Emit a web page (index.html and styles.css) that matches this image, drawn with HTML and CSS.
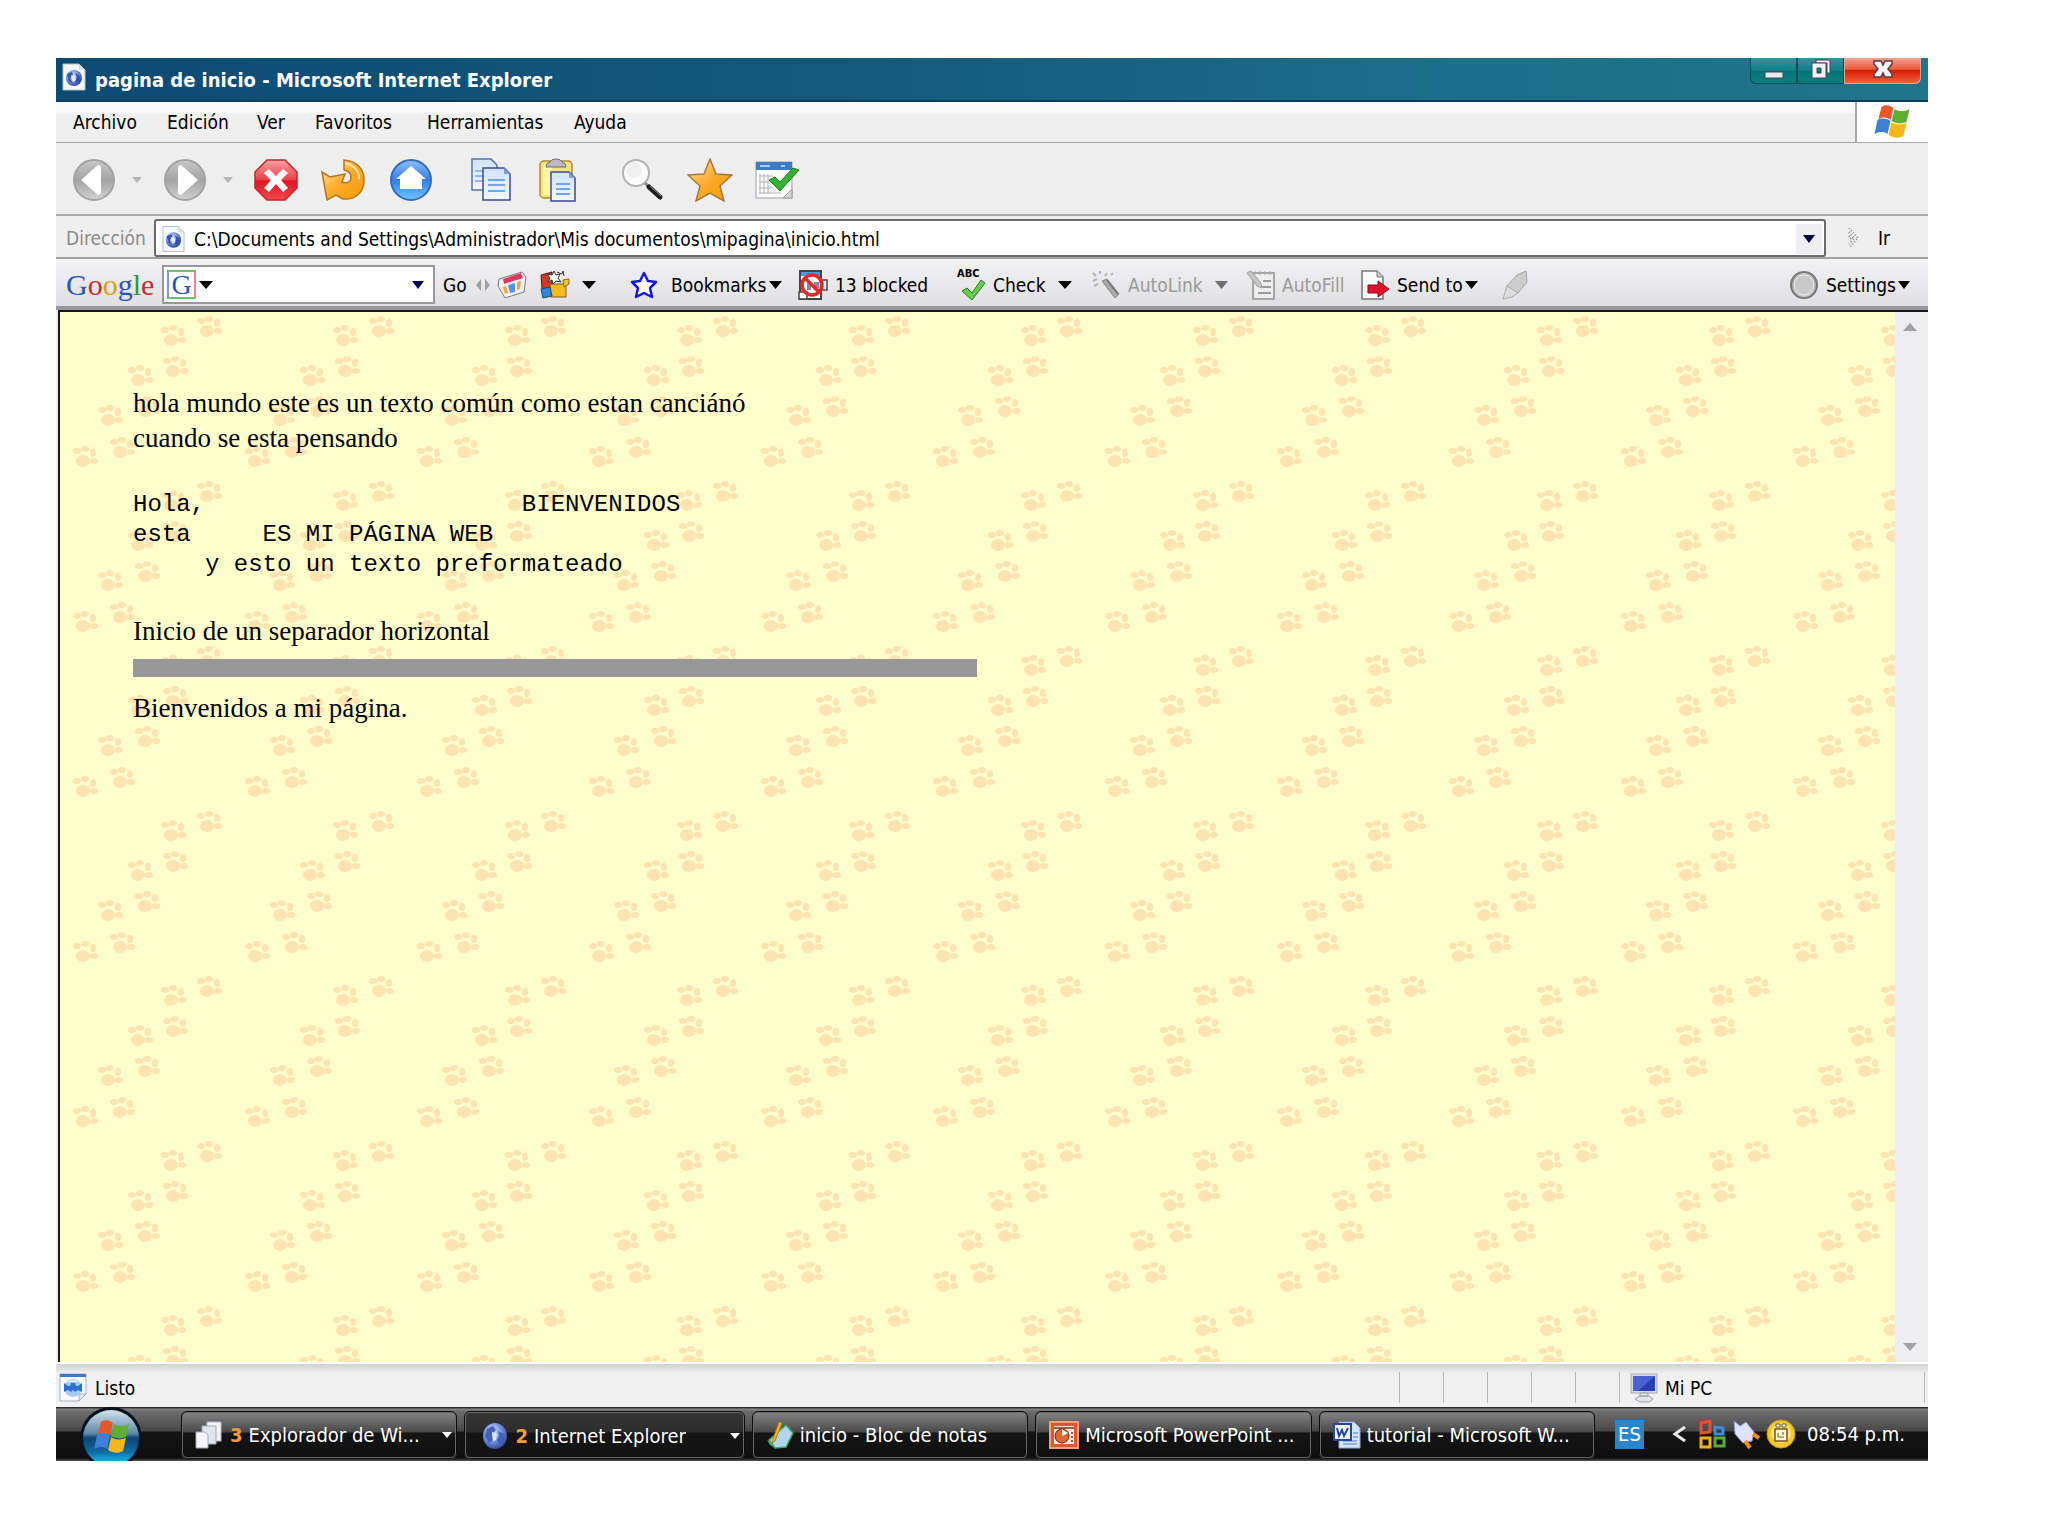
FILE: index.html
```html
<!DOCTYPE html>
<html lang="es">
<head>
<meta charset="utf-8">
<title>pagina de inicio - Microsoft Internet Explorer</title>
<link rel="stylesheet" href="styles.css">
</head>
<body>
<svg class="defs" width="0" height="0" aria-hidden="true">
  <defs>
    <linearGradient id="gray" x1="0" y1="0" x2="0" y2="1"><stop offset="0" stop-color="#c9c9c9"/><stop offset=".5" stop-color="#a3a3a3"/><stop offset="1" stop-color="#d2d2d2"/></linearGradient>
    <linearGradient id="red" x1="0" y1="0" x2="0" y2="1"><stop offset="0" stop-color="#f5a0a4"/><stop offset=".5" stop-color="#ee3f47"/><stop offset=".52" stop-color="#dd1520"/><stop offset="1" stop-color="#f04a50"/></linearGradient>
    <linearGradient id="blue" x1="0" y1="0" x2="0" y2="1"><stop offset="0" stop-color="#8fbdf6"/><stop offset=".5" stop-color="#2f7ff0"/><stop offset="1" stop-color="#6fc4ff"/></linearGradient>
    <linearGradient id="gold" x1="0" y1="0" x2="1" y2="1"><stop offset="0" stop-color="#ffe9a8"/><stop offset=".5" stop-color="#fbab2c"/><stop offset="1" stop-color="#f59a00"/></linearGradient>
    <linearGradient id="sheet" x1="0" y1="0" x2="0" y2="1"><stop offset="0" stop-color="#cfe3fc"/><stop offset="1" stop-color="#f4f9ff"/></linearGradient>
    <radialGradient id="globe" cx=".4" cy=".35" r=".7"><stop offset="0" stop-color="#dfe8fb"/><stop offset=".55" stop-color="#6f8fd8"/><stop offset="1" stop-color="#2c3f94"/></radialGradient>
    <linearGradient id="orb" x1="0" y1="0" x2="0" y2="1"><stop offset="0" stop-color="#d3e2ec"/><stop offset=".42" stop-color="#5d88a6"/><stop offset=".5" stop-color="#0d4472"/><stop offset=".75" stop-color="#0f6ba6"/><stop offset="1" stop-color="#22d0ff"/></linearGradient>
    <symbol id="flag" viewBox="0 0 36 34">
      <path d="M7 2c4-3 8-2 12 1l-3 12c-4-3-8-3-12-1z" fill="#e8562a"/>
      <path d="M20 4c5 3 10 3 15 0l-3 13c-5 2-10 2-15-1z" fill="#5eb030"/>
      <path d="M3 15c4-2 9-2 13 1l-3 13c-4-3-9-2-13 0z" fill="#3f7fd6"/>
      <path d="M17 17c4 3 10 3 15 1l-3 13c-5 3-10 2-15-1z" fill="#f5b81c"/>
    </symbol>
    <symbol id="page" viewBox="0 0 24 28">
      <path d="M1 1h16l6 6v20H1z" fill="#f7f8fb" stroke="#b8bcc8"/>
      <path d="M17 1v6h6z" fill="#d7dbe6"/>
      <circle cx="12" cy="15" r="8" fill="url(#globe)"/>
      <path d="M5 11l5-2 1 3-3 3 2 5-3-2zM13 10l5 3 1 5-4 3-2-4 2-3z" fill="#3452ae"/>
      <path d="M9 12l4 1 1 4-3 2z" fill="#e6eefc"/>
    </symbol>
  </defs>
</svg>

<main class="window">
  <header class="titlebar">
    <svg class="title-icon" width="24" height="28"><use href="#page"/></svg>
    <h1 class="title">pagina de inicio - Microsoft Internet Explorer</h1>
    <div class="controls">
      <button class="control control-min" aria-label="Minimizar"><svg width="20" height="8"><rect x="1" y="1" width="18" height="6" fill="#e9e9ee" stroke="#3d4a52"/></svg></button>
      <button class="control control-max" aria-label="Restaurar"><svg width="20" height="20"><path d="M5 1h14v13h-3V4H5z" fill="#f2f2f5" stroke="#3d4a52"/><path d="M1 4h14v15H1zM6 9v5h4V9z" fill="#f2f2f5" fill-rule="evenodd" stroke="#3d4a52"/></svg></button>
      <button class="control control-close" aria-label="Cerrar"><svg width="22" height="18"><path d="M2 1h7l2 4 2-4h7v3l-4 5 4 5v3h-7l-2-4-2 4H2v-3l4-5-4-5z" fill="#f4f4f6" stroke="#5b3a44" stroke-width="1.5"/></svg></button>
    </div>
  </header>

  <nav class="menubar">
    <div class="menus">
      <button class="menu menu-archivo">Archivo</button>
      <button class="menu menu-edicion">Edición</button>
      <button class="menu menu-ver">Ver</button>
      <button class="menu menu-favoritos">Favoritos</button>
      <button class="menu menu-herramientas">Herramientas</button>
      <button class="menu">Ayuda</button>
    </div>
    <div class="brand"><svg width="37" height="34"><use href="#flag"/></svg></div>
  </nav>

  <div class="toolbar">
    <button class="tool tool-nav" aria-label="Atrás">
      <svg width="44" height="42" viewBox="0 0 44 42"><circle cx="22" cy="21" r="20" fill="url(#gray)" stroke="#a2a2a2" stroke-width="2"/><path d="M9 21L26 6q3 0 3 3v24q0 3-3 3z" fill="#fff"/></svg>
      <svg width="10" height="6"><path d="M0 0h10L5 6z" fill="#b5b5b5"/></svg>
    </button>
    <button class="tool tool-nav" aria-label="Adelante">
      <svg width="44" height="42" viewBox="0 0 44 42"><circle cx="22" cy="21" r="20" fill="url(#gray)" stroke="#a2a2a2" stroke-width="2"/><path d="M35 21L18 6q-3 0-3 3v24q0 3 3 3z" fill="#fff"/></svg>
      <svg width="10" height="6"><path d="M0 0h10L5 6z" fill="#b5b5b5"/></svg>
    </button>
    <button class="tool tool-main" aria-label="Detener">
      <svg width="44" height="42" viewBox="0 0 44 42"><path d="M13 1h18l12 12v16L31 41H13L1 29V13z" fill="url(#red)" stroke="#c2242c" stroke-width="1.5"/><path d="M10 14l5-4 7 7 7-7 5 4-7 7 7 8-5 4-7-8-7 8-5-4 7-8z" fill="#fff"/></svg>
    </button>
    <button class="tool tool-main" aria-label="Actualizar">
      <svg width="44" height="42" viewBox="0 0 44 42"><path d="M23 1c13 1 20 9 20 20 0 13-9 20-21 19l-7-4-9 5L1 13l8 5 15-3-3 8c6 2 9 0 9-5 0-4-3-6-7-7z" fill="url(#gold)" stroke="#b5761c" stroke-width="1.5"/><path d="M24 4c9 2 14 8 14 16" fill="none" stroke="#ffe2a0" stroke-width="2"/></svg>
    </button>
    <button class="tool tool-home" aria-label="Inicio">
      <svg width="44" height="42" viewBox="0 0 44 42"><circle cx="22" cy="21" r="20" fill="url(#blue)" stroke="#3569bd" stroke-width="2"/><path d="M22 7l15 13h-4v10H11V20H7z" fill="#fff"/></svg>
    </button>
    <button class="tool tool-main" aria-label="Copiar">
      <svg width="40" height="43" viewBox="0 0 40 43"><path d="M1 1h19l6 6v25H1z" fill="url(#sheet)" stroke="#5472b8" stroke-width="1.5"/><path d="M4 13h16M4 18h16M4 23h16" stroke="#8db7f0" stroke-width="2"/><path d="M12 10h21l6 6v26H12z" fill="url(#sheet)" stroke="#40479c" stroke-width="1.5"/><path d="M33 10v6h6z" fill="#7da2de"/><path d="M17 22h17M17 27h17M17 33h17" stroke="#6ea6f2" stroke-width="2"/></svg>
    </button>
    <button class="tool tool-paste" aria-label="Pegar">
      <svg width="38" height="44" viewBox="0 0 38 44"><rect x="1" y="3" width="32" height="37" rx="4" fill="#fbe375" stroke="#b08a2a" stroke-width="1.5"/><rect x="4" y="7" width="9" height="30" fill="#fff3b0"/><path d="M7 9q0-4 4-5 1-3 6-3t6 3q4 1 4 5z" fill="#b9bcc4" stroke="#666b7a"/><path d="M12 14h18l6 6v23H12z" fill="url(#sheet)" stroke="#40479c" stroke-width="1.5"/><path d="M30 14v6h6z" fill="#7da2de"/><path d="M17 26h14M17 31h14M17 36h14" stroke="#6ea6f2" stroke-width="2"/></svg>
    </button>
    <button class="tool tool-search" aria-label="Búsqueda">
      <svg width="44" height="42" viewBox="0 0 44 42"><circle cx="15" cy="14" r="13" fill="#fbfbfb" stroke="#b4b4b4" stroke-width="2"/><circle cx="13" cy="11" r="8" fill="#f0f0f0"/><path d="M24 24l6 6" stroke="#8d8d8d" stroke-width="3"/><path d="M28 28l11 10" stroke="#1c1c1c" stroke-width="5" stroke-linecap="round"/><path d="M29 27l11 10" stroke="#999" stroke-width="1"/></svg>
    </button>
    <button class="tool tool-main" aria-label="Favoritos">
      <svg width="46" height="44" viewBox="0 0 46 44"><path d="M23 1l6 15 16 1-12 11 4 15-14-8-14 8 4-15L1 17l16-1z" fill="url(#gold)" stroke="#a8783a" stroke-width="1.5"/></svg>
    </button>
    <button class="tool" aria-label="Historial">
      <svg width="46" height="40" viewBox="0 0 46 40"><rect x="1" y="2" width="36" height="36" fill="#fafafa" stroke="#9aa0a8"/><rect x="1" y="2" width="36" height="8" fill="#3b7cc4"/><path d="M5 6h10M26 6h4" stroke="#a9cbf0" stroke-width="2"/><path d="M5 14v20M9 14v20M13 14v20M4 16h14M4 22h12M4 28h14M4 33h22" stroke="#b5b5b5"/><path d="M28 38l9-9v9z" fill="#d9d9d9" stroke="#9a9a9a"/><path d="M14 20l6-3 5 5L38 8l6 2-19 21z" fill="#35b52f" stroke="#1b7d22"/></svg>
    </button>
  </div>

  <form class="address">
    <label class="address-label" for="url">Dirección</label>
    <div class="address-box">
      <svg class="address-icon" width="23" height="28"><use href="#page"/></svg>
      <input class="address-input" id="url" type="text" value="C:\Documents and Settings\Administrador\Mis documentos\mipagina\inicio.html">
      <button class="address-drop" type="button" aria-label="Mostrar direcciones"><svg width="12" height="8"><path d="M0 0h12L6 8z" fill="#00003c"/></svg></button>
    </div>
    <svg class="chevrons" width="12" height="20"><path d="M1 0l9 10-9 10M1 4l5 6-5 6M1 8l2 2-2 2" fill="none" stroke="#8a8a8a" stroke-width="2" stroke-dasharray="1 2"/></svg>
    <button class="go" type="button">Ir</button>
  </form>

  <div class="google">
    <div class="google-logo"><span class="c-blue">G</span><span class="c-red">o</span><span class="c-yellow">o</span><span class="c-blue">g</span><span class="c-green">l</span><span class="c-red">e</span></div>
    <div class="google-search">
      <span class="google-g">G</span>
      <svg width="14" height="8"><path d="M0 0h14L7 8z" fill="#000"/></svg>
      <input class="google-input" type="text" aria-label="Buscar en Google">
      <svg width="12" height="8"><path d="M0 0h12L6 8z" fill="#000050"/></svg>
    </div>
    <button class="gbtn">Go</button>
    <div class="splitter"><svg width="14" height="12"><path d="M5 0v12L0 6zM9 0v12l5-6z" fill="#a0a0a0"/></svg></div>
    <button class="gbtn" aria-label="Noticias"><svg width="30" height="27" viewBox="0 0 30 27"><path d="M2 8L25 1l4 5-2 15-19 6L1 15z" fill="#f1f1f4" stroke="#777"/><path d="M6 8l18-6 2 5L7 13z" fill="#e5355f"/><path d="M6 16l3-1 2 7-3 1zM20 11l4-1-1 8-3 1z" fill="#f2a33a"/><path d="M11 14l7-2v9l-5 1z" fill="#5b8fe0"/></svg></button>
    <button class="gbtn" aria-label="Novedades"><svg width="30" height="29" viewBox="0 0 30 29"><path d="M1 5l11-3v17H2z" fill="#cf3a20" stroke="#5c1b10"/><path d="M10 14h16v13H11z" fill="#f5b922" stroke="#8a5c0a"/><path d="M1 19l9-2 2 9-9 2z" fill="#2d86d8" stroke="#174a86"/><path d="M8 12l2-4-3-4 5 1 2-4 2 4 4-1-2 4 3 4-5-1-3 3-1-4z" fill="#fff" stroke="#333"/><path d="M17 2l5 2 1-3 1 5" fill="none" stroke="#333"/><path d="M23 10l6-1v5l-5 3z" fill="#f0c62c" stroke="#8a6b0a"/></svg>
      <svg class="drop-far" width="14" height="8"><path d="M0 0h14L7 8z" fill="#000"/></svg></button>
    <button class="gbtn gap-wide"><svg width="28" height="28" viewBox="0 0 28 28"><path d="M14 2l4 8 8 1-6 6 2 9-8-4-8 4 2-9-6-6 8-1z" fill="#fff" stroke="#1414f0" stroke-width="2.5" stroke-linejoin="round"/></svg><span class="with-drop">Bookmarks<svg width="13" height="8"><path d="M0 0h13L6.500 8z" fill="#000"/></svg></span></button>
    <button class="gbtn gap-mid"><svg width="30" height="30" viewBox="0 0 30 30"><path d="M2 1h21v28H2z" fill="#fff" stroke="#444" stroke-width="2"/><path d="M3 2h19v4H3z" fill="#4a9be8"/><path d="M22 10h7v10h-7zM1 22h8v7H1z" fill="#fff" stroke="#444" stroke-width="1.500"/><circle cx="14" cy="15" r="10" fill="#fff" fill-opacity=".6" stroke="#e22a2a" stroke-width="3.500"/><path d="M9 13h4v7H9zM16 12h5v6h-5z" fill="#889"/><path d="M7 8l14 14" stroke="#e22a2a" stroke-width="3.500"/></svg>13 blocked</button>
    <button class="gbtn gap-mid"><span class="spell"><span class="spell-abc">ABC</span><svg width="25" height="22" viewBox="0 0 25 22"><path d="M1 12l5-3 5 5L20 1l4 3-13 17z" fill="#62cf4a" stroke="#2c7a2a"/></svg></span>Check<svg class="drop-mid" width="14" height="8"><path d="M0 0h14L7 8z" fill="#000"/></svg></button>
    <button class="gbtn gap-mid" disabled><svg width="30" height="30" viewBox="0 0 30 30"><path d="M11 11l5-2 12 15-4 4z" fill="#a9a9a9" stroke="#888"/><path d="M16 10l11 14" stroke="#777" stroke-width="2"/><path d="M2 3l3 3M9 1v3M16 3l-2 3M2 11l4-2M3 16l4-2M20 5l2-2" stroke="#b5b5b5" stroke-width="2"/></svg>AutoLink<svg class="drop-mid" width="13" height="8"><path d="M0 0h13L6.500 8z" fill="#707070"/></svg></button>
    <button class="gbtn gap-mid" disabled><svg width="29" height="30" viewBox="0 0 29 30"><path d="M7 3h21v26H7z" fill="#eee" stroke="#a5a5a5" stroke-width="2"/><path d="M9 1v4M14 1v4M19 1v4M24 1v4" stroke="#aaa"/><path d="M17 11h8M14 17h11M12 23h13" stroke="#999" stroke-width="2"/><path d="M1 3l4-2 10 12 1 5-5-2z" fill="#c4c4c4" stroke="#a0a0a0"/></svg>AutoFill</button>
    <button class="gbtn gap-mid"><svg width="30" height="30" viewBox="0 0 30 30"><path d="M2 1h15l6 6v22H2z" fill="#fafafa" stroke="#777" stroke-width="1.500"/><path d="M17 1v6h6" fill="#ccc" stroke="#777"/><path d="M8 15h10V11l11 8-11 8v-4H8z" fill="#e3102a" stroke="#8e0a1c"/></svg><span class="with-drop">Send to<svg width="13" height="8"><path d="M0 0h13L6.500 8z" fill="#000"/></svg></span></button>
    <button class="gbtn" disabled aria-label="Resaltar"><svg width="28" height="30" viewBox="0 0 28 30"><path d="M16 5l9-4 1 11-9 11-6-1-6-5z" fill="#cdcdcd" stroke="#a5a5a5"/><path d="M6 16l11 7-6 4-9 2z" fill="#dedede" stroke="#aaa"/></svg></button>
    <button class="gbtn gap-mid"><svg width="30" height="30" viewBox="0 0 30 30"><circle cx="15" cy="15" r="13" fill="url(#gray)" stroke="#777" stroke-width="2"/><circle cx="15" cy="15" r="10" fill="#c9c9c9" stroke="#eee"/></svg><span class="with-drop">Settings<svg width="12" height="8"><path d="M0 0h12L6 8z" fill="#000"/></svg></span></button>
  </div>

  <div class="viewport">
    <article class="page">
      <p class="text">hola mundo este es un texto común como estan canciánó<br>cuando se esta pensando</p>
      <pre class="pre">Hola,                      BIENVENIDOS
esta     ES MI PÁGINA WEB
     y esto un texto preformateado</pre>
      <p class="text">Inicio de un separador horizontal</p>
      <hr class="rule">
      <p class="text">Bienvenidos a mi página.</p>
    </article>
    <div class="scrollbar">
      <button class="scroll" aria-label="Subir"><svg width="14" height="8"><path d="M0 8h14L7 0z" fill="#a2a2a6"/></svg></button>
      <button class="scroll" aria-label="Bajar"><svg width="14" height="8"><path d="M0 0h14L7 8z" fill="#a2a2a6"/></svg></button>
    </div>
  </div>

  <footer class="status">
    <div class="status-main">
      <svg width="28" height="29" viewBox="0 0 28 29"><path d="M1 1h26v20l-7 7H1z" fill="#fafbfd" stroke="#a9b0bd"/><path d="M1 1h26v3H1z" fill="#3c78d0"/><path d="M20 28v-7h7z" fill="#e3e6ec" stroke="#a9b0bd"/><circle cx="14" cy="15" r="9" fill="#a5cbf8"/><path d="M5 10l4 3h2l1-3h4l1 3h2l4-3v9l-4-2-3 2-2-2-2 2-3-2-4 2z" fill="#2c70d6"/><path d="M8 9q6-4 12 0z" fill="#e6f1fe"/></svg>
      <span>Listo</span>
    </div>
    <div class="cell"></div><div class="cell"></div><div class="cell"></div><div class="cell"></div><div class="cell"></div>
    <div class="zone">
      <svg width="28" height="30" viewBox="0 0 28 30"><rect x="1" y="1" width="26" height="19" fill="#d9dbe0" stroke="#a7a9b0"/><rect x="3" y="3" width="22" height="15" fill="#2a3fb0"/><path d="M3 3h22L8 18H3z" fill="#4a63cf"/><path d="M10 20h8v3h-8zM5 26l5-3h9l4 3-4 3h-9z" fill="#e4e5e9" stroke="#9ea0a8"/></svg>
      <span>Mi PC</span>
    </div>
  </footer>

  <nav class="taskbar">
    <button class="start" aria-label="Inicio"><svg width="64" height="54" viewBox="0 0 64 54"><circle cx="32" cy="31" r="31" fill="#07141d"/><circle cx="32" cy="31" r="28" fill="url(#orb)"/><use href="#flag" x="15" y="12" width="36" height="36"/></svg></button>
    <div class="tasks">
      <button class="task"><svg width="28" height="28" viewBox="0 0 28 28"><path d="M12 1h14v19H12z" fill="#f3f3f6" stroke="#b9b9c4"/><path d="M7 5h14v18H7z" fill="#e3e4ee" stroke="#a5a7b8"/><path d="M1 11h9l3 3v13H1z" fill="#f6f6fa" stroke="#a5a7b8"/></svg><b class="count">3</b><span class="task-name">Explorador de Wi...</span><svg class="task-drop" width="10" height="6"><path d="M0 0h10L5 6z" fill="#fff"/></svg></button>
      <button class="task task-active"><svg width="26" height="28" viewBox="0 0 26 28"><ellipse cx="13" cy="14" rx="12" ry="13" fill="url(#globe)"/><path d="M5 7l6-3 3 4-4 4 1 6-4 3-4-7zM16 9l6 3 1 5-5 6-3-5 2-4z" fill="#4560b4"/><path d="M10 10l5 2-1 6-3 1z" fill="#dbe5fa"/></svg><b class="count">2</b><span class="task-name">Internet Explorer</span><svg class="task-drop" width="10" height="6"><path d="M0 0h10L5 6z" fill="#fff"/></svg></button>
      <button class="task"><svg width="28" height="28" viewBox="0 0 28 28"><path d="M3 19L20 4l7 8-7 14-11 1z" fill="#b4d5ef" stroke="#3fa560" stroke-width="1.500"/><path d="M1 19l5 3 3 5-5-3z" fill="#3fae5c"/><path d="M13 1l3 1-7 18-3 2 1-4z" fill="#f5b52c" stroke="#b87a10"/></svg><span class="task-name">inicio - Bloc de notas</span></button>
      <button class="task"><svg width="30" height="28" viewBox="0 0 30 28"><rect x="1" y="1" width="28" height="26" fill="#d8592c" stroke="#f0a07c" stroke-width="2"/><rect x="5" y="5" width="20" height="18" fill="#fbe9e0"/><circle cx="13" cy="15" r="7" fill="#e0662e" stroke="#5a2412"/><path d="M13 15V8l6 4z" fill="#fff"/><path d="M5 7h20M22 12h2M22 16h2M22 20h2" stroke="#7a3018" stroke-width="1.500"/></svg><span class="task-name">Microsoft PowerPoint ...</span></button>
      <button class="task"><svg width="28" height="28" viewBox="0 0 28 28"><path d="M6 1h15l6 6v20H6z" fill="#d6e4fa" stroke="#8ba6dc"/><path d="M10 20h14M10 23h14M20 12h5M20 16h5" stroke="#4c78c8"/><rect x="1" y="3" width="17" height="16" fill="#f2f6ff" stroke="#2448a0" stroke-width="2"/><path d="M4 7l2 8 3-6 2 6 4-8" fill="none" stroke="#2448a0" stroke-width="2"/></svg><span class="task-name">tutorial - Microsoft W...</span></button>
    </div>
    <div class="tray">
      <span class="lang">ES</span>
      <svg class="tray-arrow" width="14" height="16"><path d="M13 1L3 8l10 7" fill="none" stroke="#e8e8e8" stroke-width="3"/></svg>
      <svg width="28" height="29" viewBox="0 0 28 29"><path d="M3 3l9-2v11l-9 1z" fill="none" stroke="#e8502a" stroke-width="3"/><path d="M17 7l8 1v6h-8z" fill="none" stroke="#3b8ede" stroke-width="3"/><path d="M3 18h9v9H3z" fill="none" stroke="#f2b01e" stroke-width="3"/><path d="M17 18h9v8h-9z" fill="none" stroke="#5cab35" stroke-width="3"/></svg>
      <svg width="28" height="29" viewBox="0 0 28 29"><path d="M2 1l6 5 6-4 8 10-2 9-9 2-8-9z" fill="#dfe3fb" stroke="#8b93d0"/><path d="M21 14l6 4M13 21l5 7" stroke="#f09022" stroke-width="4"/></svg>
      <svg width="30" height="30" viewBox="0 0 30 30"><circle cx="15" cy="15" r="14" fill="#f2c92c" stroke="#c8961a"/><circle cx="15" cy="14" r="10" fill="#f8e48a"/><rect x="9" y="10" width="12" height="12" fill="#fff7d5" stroke="#6d5a1c" stroke-width="1.500"/><path d="M10 5h4v3h-4zM16 5h4v3h-4z" fill="#fff" stroke="#6d5a1c"/><path d="M12 14v4M12 18h6M17 13v3" stroke="#6d5a1c"/></svg>
      <time class="clock">08:54 p.m.</time>
    </div>
  </nav>
</main>
</body>
</html>
```
FILE: styles.css
```css
* { box-sizing: border-box; }

body {
  margin: 0;
  height: 100vh;
  padding: 58px 120px 75px 56px;
  background: #fff;
  color: #000;
  font: 19px/24px "DejaVu Sans Condensed", "DejaVu Sans", "Noto Sans", sans-serif;
}

.defs { position: absolute; }

svg { flex: none; display: block; }

button {
  margin: 0;
  padding: 0;
  border: 0;
  background: none;
  color: inherit;
  font: inherit;
  white-space: nowrap;
}

.window {
  height: 100%;
  display: flex;
  flex-direction: column;
  background: #eee;
}

/* title bar */
.titlebar {
  flex: none;
  height: 44px;
  display: flex;
  align-items: flex-start;
  padding: 0 7px 0 6px;
  border-bottom: 2px solid #0b3a5c;
  background: linear-gradient(90deg, #0d4a74, #14587c 40%, #1c6f88 75%, #20748c);
}
.title-icon { margin-top: 5px; }
.title {
  margin: 10px 0 0 9px;
  flex: 1;
  color: #fff;
  font-size: 20px;
  line-height: 24px;
  font-weight: bold;
}
.controls { display: flex; height: 26px; }
.control {
  display: flex;
  justify-content: center;
  align-items: center;
  border: 1px solid #0b4a5c;
  border-top: 0;
  background: linear-gradient(#35949c, #0e7f88 50%, #067377 52%, #0b8080);
}
.control-min { width: 47px; padding-top: 8px; border-radius: 0 0 0 6px; }
.control-max { width: 47px; padding-bottom: 3px; }
.control-close {
  width: 77px;
  padding-bottom: 3px;
  border-color: #f2a58c;
  border-radius: 0 0 6px 0;
  background: linear-gradient(#f4a08c, #ee5a3c 45%, #d81c04 50%, #f5623c);
}

/* menu bar */
.menubar {
  flex: none;
  height: 41px;
  display: flex;
  border-bottom: 1px solid #a5a5a5;
  background: linear-gradient(#fafafa 10px, #f0f0f0 12px, #eee);
}
.menus { flex: 1; display: flex; align-items: center; padding: 0 0 0 17px; }
.menu { text-align: left; }
.menu-archivo { width: 94px; }
.menu-edicion { width: 90px; }
.menu-ver { width: 58px; }
.menu-favoritos { width: 112px; }
.menu-herramientas { width: 147px; }
.brand {
  width: 73px;
  display: flex;
  align-items: center;
  justify-content: center;
  border-left: 2px solid #a8a8a8;
  background: #fff;
}

/* standard buttons */
.toolbar {
  flex: none;
  height: 73px;
  display: flex;
  align-items: center;
  padding: 2px 0 0 16px;
  border-bottom: 2px solid #acacac;
  background: #eeeeef;
}
.tool { width: 68px; display: flex; align-items: center; }
.tool-nav { width: 91px; gap: 16px; }
.tool-nav + .tool-main { width: 67px; }
.tool-home { width: 82px; }
.tool-paste { width: 82px; }
.tool-search { width: 66px; }

/* address bar */
.address {
  flex: none;
  height: 43px;
  display: flex;
  align-items: center;
  padding: 3px 38px 0 10px;
  border-bottom: 2px solid #a0a0a0;
  background: #efeff0;
}
.address-label { width: 88px; color: #8a8a8a; }
.address-box {
  flex: 1;
  height: 38px;
  display: flex;
  align-items: center;
  padding: 1px 2px 0 6px;
  border: 2px solid #6a6a6a;
  border-radius: 3px;
  background: #fff;
}
.address-input {
  flex: 1;
  min-width: 0;
  margin: 0;
  padding: 0 0 0 9px;
  border: 0;
  background: none;
  color: #000;
  font: inherit;
}
.address-drop {
  width: 26px;
  height: 30px;
  display: flex;
  align-items: center;
  justify-content: center;
  background: #eeeef2;
}
.chevrons { margin: 0 18px 0 22px; }

/* search toolbar */
.google {
  flex: none;
  height: 51px;
  display: grid;
  grid-template-columns: 96px 281px 33px 21px 43px 90px 168px 159px 134px 155px 114px 141px 1fr auto;
  align-items: center;
  padding: 4px 18px 0 10px;
  border-bottom: 4px solid #98989c;
  background: linear-gradient(#f2f1f3, #e0dfe2);
}
.google-logo { font: 30px/36px "Liberation Serif", serif; }
.c-blue { color: #2a56b8; }
.c-red { color: #cc2a2a; }
.c-yellow { color: #d6a21c; }
.c-green { color: #2a9a3c; }
.google-search {
  width: 273px;
  height: 39px;
  display: flex;
  align-items: center;
  gap: 3px;
  padding: 0 9px 0 3px;
  border: 2px solid #98989c;
  background: #fff;
}
.google-g {
  width: 29px;
  height: 29px;
  border: 2px solid;
  border-color: #6cc070 #e08a8a #6cc070 #7a9ae0;
  color: #2a56b8;
  font: 28px/25px "Liberation Serif", serif;
  text-align: center;
}
.google-input { flex: 1; min-width: 0; border: 0; padding: 0; font: inherit; background: none; }
.splitter { height: 36px; display: flex; align-items: center; }
.gbtn { display: flex; align-items: center; text-align: left; }
.gbtn:disabled { color: #9a9a9a; }
.gap-wide { gap: 13px; }
.gap-mid { gap: 7px; }
.with-drop { display: flex; align-items: center; gap: 2px; }
.drop-far { margin-left: 12px; }
.drop-mid { margin-left: 5px; }
.spell { width: 29px; display: flex; flex-direction: column; align-items: flex-end; }
.spell-abc { align-self: flex-start; font-size: 11px; line-height: 10px; font-weight: bold; }

/* document */
.viewport {
  flex: 1;
  min-height: 0;
  display: flex;
  margin-left: 2px;
  padding-right: 3px;
  border-top: 2px solid #151515;
  border-left: 2px solid #151515;
}
.page {
  flex: 1;
  padding: 74px 73px 0;
  background-color: #ffffcb;
  background-image: url("data:image/svg+xml,%3Csvg xmlns='http://www.w3.org/2000/svg' width='172' height='165' fill='%23ffe3b1'%3E%3Cg id='p'%3E%3Cellipse cx='23' cy='149' rx='7' ry='6'/%3E%3Cellipse cx='17' cy='139' rx='4' ry='3'/%3E%3Cellipse cx='25' cy='137' rx='4' ry='3'/%3E%3Cellipse cx='33' cy='141' rx='3' ry='4'/%3E%3Cellipse cx='34' cy='149' rx='4' ry='3'/%3E%3C/g%3E%3Cuse href='%23p' x='37' y='-9'/%3E%3Cuse href='%23p' x='25' y='-41'/%3E%3Cuse href='%23p' x='62' y='-50'/%3E%3Cuse href='%23p' x='55' y='-81'/%3E%3Cuse href='%23p' x='90' y='-90'/%3E%3Cuse href='%23p' x='88' y='-121'/%3E%3Cuse href='%23p' x='124' y='-130'/%3E%3C/svg%3E");
}
.text { margin: 0; font: 27px/35px "Liberation Serif", "Times New Roman", serif; }
.pre { margin: 34px 0; font: 24px/30px "Liberation Mono", "Courier New", monospace; }
.rule { width: 844px; max-width: 100%; height: 18px; margin: 10px 0 14px; border: 0; background: #989898; }
.scrollbar {
  width: 30px;
  display: flex;
  flex-direction: column;
  justify-content: space-between;
  align-items: center;
  background: #eeeef1;
}
.scroll { width: 30px; height: 30px; display: flex; align-items: center; justify-content: center; }

/* status bar */
.status {
  flex: none;
  height: 45px;
  display: flex;
  align-items: center;
  padding: 6px 3px 2px 3px;
  border-top: 2px solid #fff;
  background: linear-gradient(#d0d2d2, #f1f1f1 10px);
}
.status-main { flex: 1; display: flex; align-items: center; gap: 8px; }
.cell { width: 44px; height: 31px; border-left: 1px solid #b5b5b5; }
.zone {
  width: 306px;
  height: 31px;
  display: flex;
  align-items: center;
  gap: 7px;
  padding-left: 10px;
  border: solid #b5b5b5;
  border-width: 0 1px;
}

/* task bar */
.taskbar {
  flex: none;
  height: 54px;
  display: flex;
  color: #fff;
  font-size: 20px;
  background: linear-gradient(#2a2a2a 1px, #8c8c8c 2px, #6d6d6d 4px, #484848 24px, #141414 25px, #0f0f0f 51px, #555);
}
.start { width: 64px; margin: 0 38px 0 23px; }
.tasks { flex: 1; display: flex; gap: 7px; padding: 4px 0 2px; }
.task {
  flex: 1;
  min-width: 0;
  display: flex;
  align-items: center;
  padding: 0 3px 0 12px;
  border: 2px solid #6a6a6a;
  border-radius: 6px;
  outline: 1px solid #0c0c0c;
  outline-offset: -1px;
  background: linear-gradient(#828282, #484848 19px, #151515 20px, #0f0f0f);
}
.task-active { padding: 2px 3px 0 16px; background: linear-gradient(#363636, #2c2c2c 19px, #141414 20px, #141414); }
.count { margin-left: 7px; color: #f59a3c; }
.task-name { margin-left: 6px; overflow: hidden; }
.task-drop { margin-left: auto; }
.tray { flex: none; width: 333px; display: flex; align-items: center; gap: 6px; padding-left: 20px; }
.lang { width: 29px; line-height: 29px; background: #2a86cc; text-align: center; }
.tray-arrow { margin: 0 6px 0 22px; }
.clock { margin-left: 5px; white-space: nowrap; }
```
